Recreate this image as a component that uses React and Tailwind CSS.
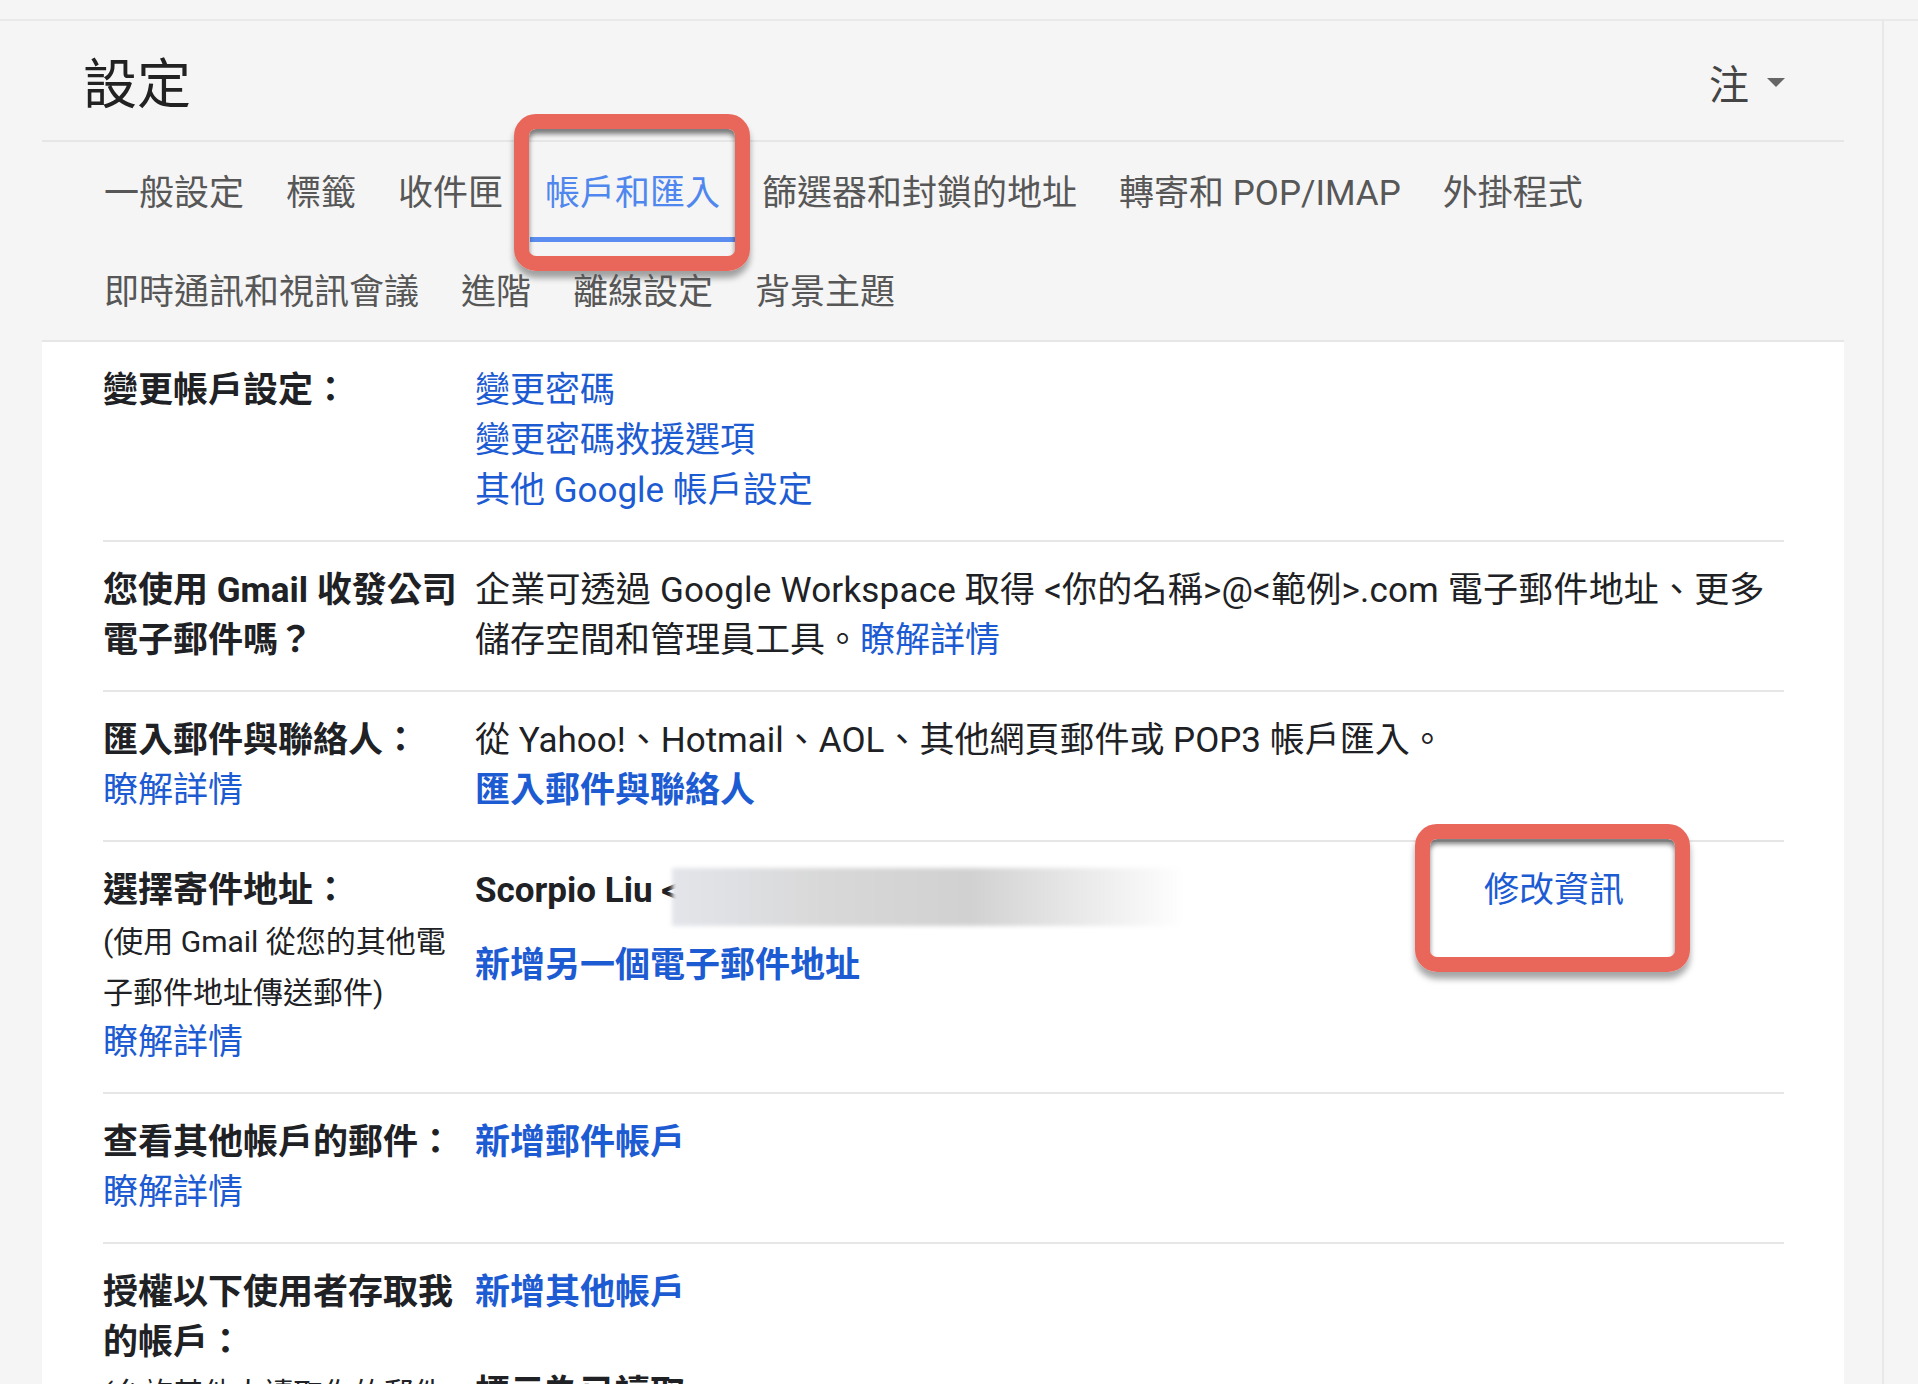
import React from "react";

// Gmail settings page: 帳戶和匯入 tab, with annotation boxes
const FONT = { fontFamily: 'Roboto, "Noto Sans CJK TC", "Noto Sans CJK SC", sans-serif' };

const tabsRow1 = ["一般設定", "標籤", "收件匣", "帳戶和匯入", "篩選器和封鎖的地址", "轉寄和 POP/IMAP", "外掛程式"];
const tabsRow2 = ["即時通訊和視訊會議", "進階", "離線設定", "背景主題"];

const ACTIVE = "帳戶和匯入";

const Callout = ({ className }) => (
  <div
    className={
      "pointer-events-none absolute rounded-[22px] border-[15px] border-[#e8665a] shadow-[0_7px_6px_rgba(0,0,0,0.35),inset_0_5px_5px_rgba(0,0,0,0.5)] " +
      className
    }
  />
);

const Tab = ({ label }) => {
  const active = label === ACTIVE;
  return (
    <div className="relative flex h-[99px] items-center px-[21px] pt-[4px]">
      <span className={active ? "text-[#4f87ee]" : "text-[#575757]"}>{label}</span>
      {active && (
        <>
          <div className="absolute bottom-[-1px] left-[6px] right-[6px] h-[5px] bg-[#5a8def]" />
          <Callout className="-left-[10px] -right-[9px] -top-[28px] -bottom-[30px]" />
        </>
      )}
    </div>
  );
};

const Row = ({ label, children, last }) => (
  <div className={"flex pt-[24px] pb-[24px] " + (last ? "" : "border-b-2 border-[#e6e6e6]")}>
    <div className="w-[372px] shrink-0 pr-[14px]">{label}</div>
    <div className="flex-1">{children}</div>
  </div>
);

const LINK = "text-[#1d5bd3]";

export default function App() {
  return (
    <div style={FONT} className="h-[1384px] w-[1918px] overflow-hidden bg-[#f5f5f5] text-[#202124]">
      <div className="h-[21px] border-b-2 border-[#e9e9e9]" />
      <div className="flex h-[1363px]">
        <div className="w-[1884px] border-r-2 border-[#e8e8e8]">
          <div className="ml-[42px] w-[1802px]">
            {/* header */}
            <div className="flex h-[121px] items-center justify-between border-b-2 border-[#e6e6e6] pl-[41px] pr-[58px] pt-[10px]">
              <h1 className="text-[54px] font-normal leading-none text-[#222]">設定</h1>
              <div className="flex items-center gap-[17px]">
                <span className="text-[40px] leading-none text-[#444]">注</span>
                <svg width="20" height="10" viewBox="0 0 20 10" className="-mt-[6px]">
                  <path d="M1 0 L19 0 L10 9 Z" fill="#666" />
                </svg>
              </div>
            </div>

            {/* tabs */}
            <div className="border-b-2 border-[#e6e6e6] pl-[41px] text-[35px] leading-none">
              <div className="flex">
                {tabsRow1.map((t) => (
                  <Tab key={t} label={t} />
                ))}
              </div>
              <div className="flex">
                {tabsRow2.map((t) => (
                  <Tab key={t} label={t} />
                ))}
              </div>
            </div>

            {/* content */}
            <div className="h-[1100px] bg-white pl-[61px] pr-[60px] text-[35px] leading-[50px]">
              <Row label={<div className="font-bold">變更帳戶設定：</div>}>
                <div className={LINK}>變更密碼</div>
                <div className={LINK}>變更密碼救援選項</div>
                <div className={LINK}>其他 Google 帳戶設定</div>
              </Row>

              <Row
                label={
                  <div className="whitespace-nowrap font-bold">
                    您使用 Gmail 收發公司
                    <br />
                    電子郵件嗎？
                  </div>
                }
              >
                <div className="whitespace-nowrap tracking-[0.2px]">
                  企業可透過 Google Workspace 取得 &lt;你的名稱&gt;@&lt;範例&gt;.com 電子郵件地址、更多
                </div>
                <div>
                  儲存空間和管理員工具。<span className={LINK}>瞭解詳情</span>
                </div>
              </Row>

              <Row
                label={
                  <>
                    <div className="font-bold">匯入郵件與聯絡人：</div>
                    <div className={LINK}>瞭解詳情</div>
                  </>
                }
              >
                <div>從 Yahoo!、Hotmail、AOL、其他網頁郵件或 POP3 帳戶匯入。</div>
                <div className={LINK + " font-bold"}>匯入郵件與聯絡人</div>
              </Row>

              <Row
                label={
                  <>
                    <div className="font-bold">選擇寄件地址：</div>
                    <div className="whitespace-nowrap text-[30px] leading-[51px]">
                      (使用 Gmail 從您的其他電
                      <br />
                      子郵件地址傳送郵件)
                    </div>
                    <div className={LINK}>瞭解詳情</div>
                  </>
                }
              >
                <div className="flex items-start justify-between pr-[160px]">
                  <div>
                    <div className="flex h-[50px] items-center whitespace-nowrap font-bold">
                      <span>Scorpio Liu &lt;</span>
                      <span className="-ml-[7px] mt-[12px] inline-block h-[58px] w-[513px] bg-[linear-gradient(90deg,#e3e5ea_0%,#d8d8d8_30%,#d1d1d1_58%,#efefef_85%,#ffffff_100%)] blur-[2px]" />
                    </div>
                    <div className={LINK + " mt-[25px] font-bold"}>新增另一個電子郵件地址</div>
                  </div>
                  <div className="relative">
                    <span className={LINK}>修改資訊</span>
                    <Callout className="-left-[69px] -right-[66px] -top-[42px] -bottom-[56px]" />
                  </div>
                </div>
              </Row>

              <Row
                label={
                  <>
                    <div className="font-bold">查看其他帳戶的郵件：</div>
                    <div className={LINK}>瞭解詳情</div>
                  </>
                }
              >
                <div className={LINK + " font-bold"}>新增郵件帳戶</div>
              </Row>

              <Row
                last
                label={
                  <>
                    <div className="font-bold">
                      授權以下使用者存取我
                      <br />
                      的帳戶：
                    </div>
                    <div className="text-[30px] leading-[51px]">(允許其他人讀取你的郵件及代你傳送郵件)</div>
                  </>
                }
              >
                <div className={LINK + " font-bold"}>新增其他帳戶</div>
                <div className="mt-[51px] font-bold">標示為已讀取</div>
              </Row>
            </div>
          </div>
        </div>
      </div>
    </div>
  );
}
